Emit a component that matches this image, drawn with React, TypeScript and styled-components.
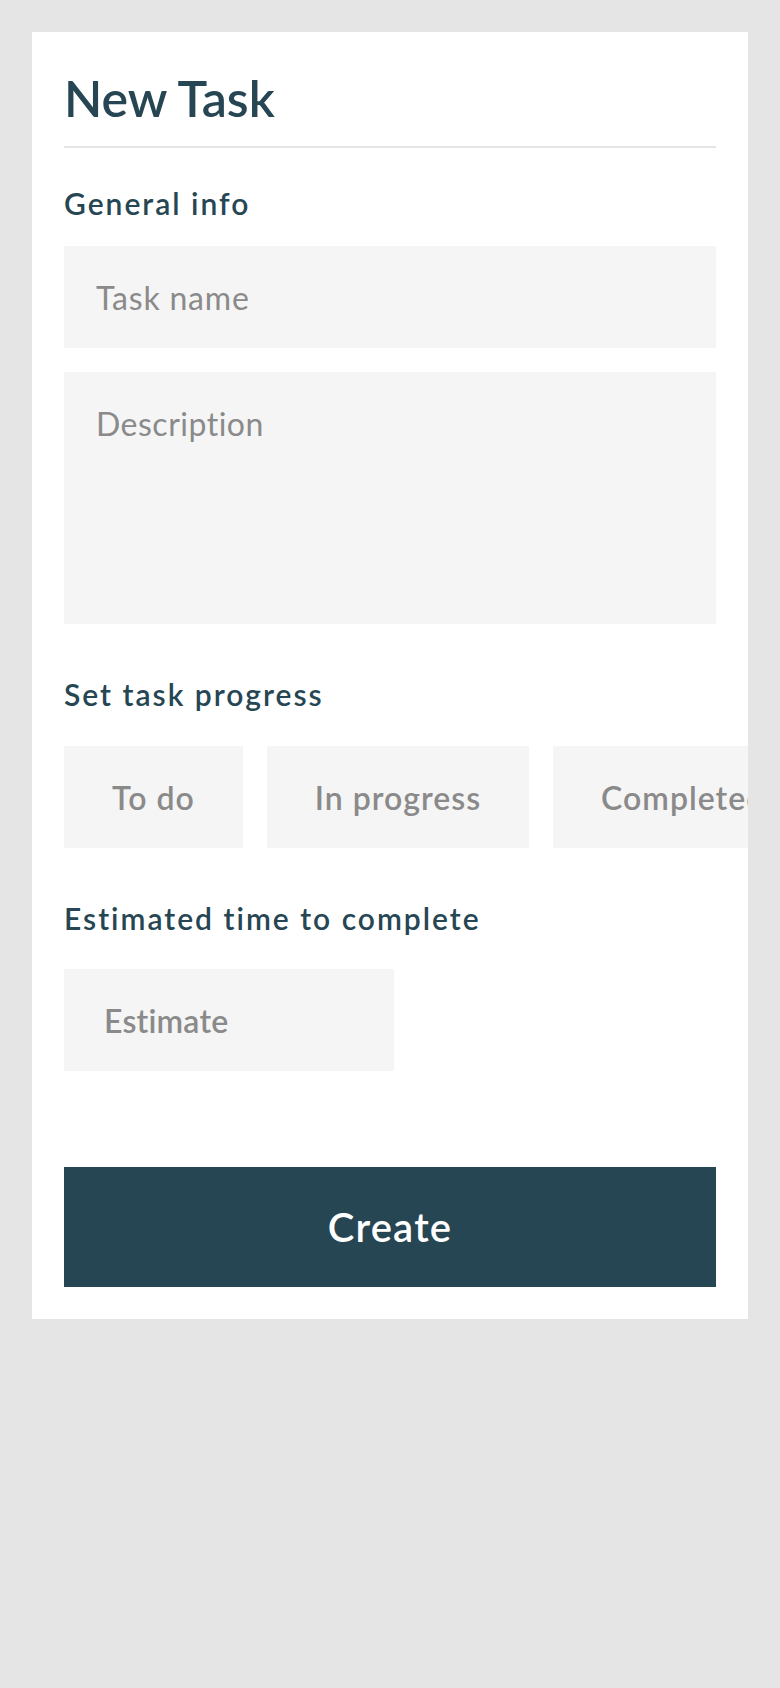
import React from "react";
import styled, {createGlobalStyle} from "styled-components";

const GlobalStyle = createGlobalStyle`
  html, body {
    margin: 0;
    padding: 0;
    background: #e5e5e5;
    min-height: 100vh;
  }

  * {
    box-sizing: border-box;
  }
`;

const Page = styled.main`
  padding: 32px;
  font-family: Lato, "Noto Sans", sans-serif;
  color: #264653;
`;

const Card = styled.form`
  background: #fff;
  padding: 32px;
  overflow: hidden;
  display: flex;
  flex-direction: column;
`;

const Title = styled.h1`
  margin: 4px 0 0;
  padding-bottom: 18px;
  border-bottom: 2px solid #e5e5e5;
  font-size: 50px;
  line-height: 60px;
  font-weight: 600;
`;

const SectionTitle = styled.h2<{ $top: number; $bottom: number }>`
  margin: ${p => p.$top}px 0 ${p => p.$bottom}px;
  font-size: 30px;
  line-height: 36px;
  font-weight: 600;
  letter-spacing: 2px;
`;

const Field = styled.input<{ $width?: number; $bold?: boolean }>`
  width: ${p => (p.$width ? `${p.$width}px` : "100%")};
  height: 102px;
  padding: 0 ${p => (p.$bold ? 40 : 32)}px;
  border: none;
  outline: none;
  background: #f5f5f5;
  font-family: inherit;
  font-size: 32px;
  font-weight: ${p => (p.$bold ? 600 : 400)};
  letter-spacing: ${p => (p.$bold ? 0.2 : 0.8)}px;
  color: #264653;

  &::placeholder {
    color: #8a8a8a;
  }
`;

const TextArea = styled.textarea`
  width: 100%;
  height: 252px;
  margin-top: 24px;
  padding: 32px;
  border: none;
  outline: none;
  resize: none;
  background: #f5f5f5;
  font-family: inherit;
  font-size: 32px;
  line-height: normal;
  letter-spacing: 0.5px;
  color: #264653;

  &::placeholder {
    color: #8a8a8a;
  }
`;

const ProgressRow = styled.div`
  display: flex;
  gap: 24px;
  flex-wrap: nowrap;
`;

const ProgressButton = styled.button`
  flex-shrink: 0;
  height: 102px;
  padding: 0 48px;
  border: none;
  background: #f5f5f5;
  font-family: inherit;
  font-size: 32px;
  font-weight: 600;
  letter-spacing: 1px;
  color: #8a8a8a;
  white-space: nowrap;
  cursor: pointer;
`;

const CreateButton = styled.button`
  margin-top: 96px;
  width: 100%;
  height: 120px;
  border: none;
  background: #264653;
  color: #fff;
  font-family: inherit;
  font-size: 40px;
  font-weight: 600;
  letter-spacing: 1.2px;
  cursor: pointer;
`;

const progressSteps = ["To do", "In progress", "Completed"];

export default function App() {
    return (
        <Page>
            <GlobalStyle/>
            <Card onSubmit={e => e.preventDefault()}>
                <Title>New Task</Title>

                <SectionTitle $top={37} $bottom={25}>General info</SectionTitle>
                <Field placeholder="Task name"/>
                <TextArea placeholder="Description"/>

                <SectionTitle $top={52} $bottom={34}>Set task progress</SectionTitle>
                <ProgressRow>
                    {progressSteps.map(step => (
                        <ProgressButton type="button" key={step}>{step}</ProgressButton>
                    ))}
                </ProgressRow>

                <SectionTitle $top={52} $bottom={33}>Estimated time to complete</SectionTitle>
                <Field placeholder="Estimate" $width={330} $bold/>

                <CreateButton type="submit">Create</CreateButton>
            </Card>
        </Page>
    );
}
